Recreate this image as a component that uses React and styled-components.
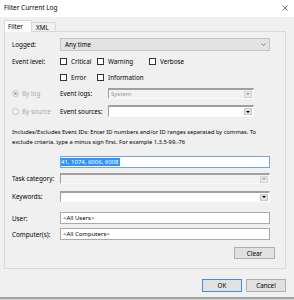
import React from 'react';
import styled, { createGlobalStyle } from 'styled-components';

const Global = createGlobalStyle`
  html, body { margin: 0; padding: 0; background: #d6d6d6; }
  body { width: 294px; height: 300px; overflow: hidden; }
  * { box-sizing: border-box; }
`;

const Dialog = styled.div`
  width: 294px;
  height: 299px;
  background: #f0f0f0;
  border-bottom: 2px solid #a3a3a3;
  display: flex;
  flex-direction: column;
  font-family: "Noto Sans", "Open Sans", sans-serif;
  font-size: 6.3px;
  color: #000;
`;

const TitleBar = styled.div`
  height: 17px;
  flex-shrink: 0;
  background: #fff;
  display: flex;
  align-items: center;
  justify-content: space-between;
  padding: 0 6px 2px 4px;
  font-size: 6.5px;
`;

const TabStrip = styled.div`
  margin-top: 3px;
  height: 12px;
  margin-bottom: -1px;
  padding-left: 4px;
  display: flex;
  align-items: flex-end;
  position: relative;
  z-index: 1;
`;

const Tab = styled.div`
  width: ${p => (p.$active ? 28 : 25)}px;
  height: ${p => (p.$active ? 12 : 10)}px;
  margin-left: ${p => (p.$active ? 0 : -1)}px;
  background: ${p => (p.$active ? '#fbfbfb' : '#f0f0f0')};
  border: 1px solid #d9d9d9;
  border-bottom: ${p => (p.$active ? 'none' : '1px solid #d9d9d9')};
  display: flex;
  align-items: center;
  padding-left: ${p => (p.$active ? 3 : 4)}px;
  padding-bottom: ${p => (p.$active ? 1 : 0)}px;
  font-size: 6.3px;
`;

const Panel = styled.div`
  margin: 0 8px 0 4px;
  border: 1px solid #dadada;
  background: #f0f0f0;
  padding: 0 15px 9px 7px;
  display: flex;
  flex-direction: column;
`;

const Row = styled.div`
  display: flex;
  align-items: center;
  height: ${p => p.$h}px;
  margin-top: ${p => p.$mt}px;
  margin-right: ${p => p.$mr || 0}px;
  justify-content: ${p => (p.$end ? 'flex-end' : 'flex-start')};
`;

const Label = styled.div`
  width: 48px;
  flex-shrink: 0;
  white-space: nowrap;
  color: ${p => (p.$disabled ? '#a3a3a3' : '#000')};
`;

const Select = styled.div`
  flex: 1;
  height: 13px;
  background: #e3e3e3;
  border: 1px solid #c4c4c4;
  display: flex;
  align-items: center;
  justify-content: space-between;
  padding: 0 3px 0 4px;
`;

const CheckGroup = styled.div`
  display: grid;
  grid-template-columns: 37px 52px auto;
  align-items: center;
`;

const Check = styled.label`
  display: flex;
  align-items: center;
  gap: 4px;
  white-space: nowrap;
`;

const Box = styled.span`
  width: 7px;
  height: 7px;
  background: #fff;
  border: 1px solid #333;
  flex-shrink: 0;
`;

const RadioCell = styled.div`
  width: 48px;
  flex-shrink: 0;
  display: flex;
  align-items: center;
  gap: 3px;
  color: #a8a8a8;
  white-space: nowrap;
`;

const RadioDot = styled.span`
  width: 7px;
  height: 7px;
  border-radius: 50%;
  border: 1px solid #c4c4c4;
  background: #f4f4f4;
  display: flex;
  align-items: center;
  justify-content: center;
  &::after {
    content: '';
    width: 3px;
    height: 3px;
    border-radius: 50%;
    background: ${p => (p.$checked ? '#a8a8a8' : 'transparent')};
  }
`;

const Combo = styled.div`
  flex: 1;
  height: ${p => p.$h || 11}px;
  background: ${p => (p.$disabled ? '#f2f2f2' : '#fff')};
  border-top: 2px solid #a0a0a0;
  border-left: 1px solid #a0a0a0;
  border-right: 1px solid #fafafa;
  border-bottom: 1px solid #fafafa;
  display: flex;
  align-items: center;
  justify-content: space-between;
  padding: 0 1px 0 2px;
  color: ${p => (p.$disabled ? '#9a9a9a' : '#000')};
  font-size: 6px;
`;

const ArrowBtn = styled.span`
  width: 8px;
  height: 7px;
  background: ${p => (p.$disabled ? '#e8e8e8' : '#e1e1e1')};
  border: 1px solid ${p => (p.$disabled ? '#d4d4d4' : '#c9c9c9')};
  display: flex;
  align-items: center;
  justify-content: center;
  &::after {
    content: '';
    border-left: 2px solid transparent;
    border-right: 2px solid transparent;
    border-top: 2px solid ${p => (p.$disabled ? '#a0a0a0' : '#000')};
  }
`;

const Description = styled.div`
  line-height: 10px;
  white-space: nowrap;
  font-size: 5.75px;
  margin-top: ${p => p.$mt}px;
`;

const Spacer = styled.div`
  width: 48px;
  flex-shrink: 0;
`;

const TextInput = styled.div`
  flex: 1;
  height: 12px;
  background: #fff;
  border: 1px solid ${p => (p.$focus ? '#6fa6dc' : '#a9a9a9')};
  display: flex;
  align-items: center;
  padding-left: ${p => (p.$focus ? 0 : 2)}px;
  font-size: 6px;
  white-space: nowrap;
  overflow: hidden;
`;

const Highlight = styled.span`
  background: #3390ff;
  color: #fff;
  line-height: 8px;
  padding-right: 1px;
`;

const Button = styled.div`
  width: ${p => p.$w || 40}px;
  height: ${p => p.$h || 13}px;
  background: #e1e1e1;
  border: 1px solid ${p => (p.$default ? '#3f8fdc' : '#b0b0b0')};
  display: flex;
  align-items: center;
  justify-content: center;
  font-size: 6.3px;
`;

const Footer = styled.div`
  margin-top: 10px;
  padding-right: 8px;
  display: flex;
  justify-content: flex-end;
  gap: 4px;
`;

const Chevron = () => (
  <svg width="5" height="3" viewBox="0 0 5 3">
    <polyline points="0.5,0.5 2.5,2.5 4.5,0.5" fill="none" stroke="#666" strokeWidth="0.8" />
  </svg>
);

const CloseX = () => (
  <svg width="6" height="6" viewBox="0 0 6 6">
    <path d="M0.5 0.5 L5.5 5.5 M5.5 0.5 L0.5 5.5" stroke="#444" strokeWidth="0.7" />
  </svg>
);

export default function App() {
  return (
    <>
      <Global />
      <Dialog>
        <TitleBar>
          <span>Filter Current Log</span>
          <CloseX />
        </TitleBar>
        <TabStrip>
          <Tab $active>Filter</Tab>
          <Tab>XML</Tab>
        </TabStrip>
        <Panel>
          <Row $h={13} $mt={6}>
            <Label>Logged:</Label>
            <Select>
              <span>Any time</span>
              <Chevron />
            </Select>
          </Row>
          <Row $h={10} $mt={5}>
            <Label>Event level:</Label>
            <CheckGroup>
              <Check><Box />Critical</Check>
              <Check><Box />Warning</Check>
              <Check><Box />Verbose</Check>
            </CheckGroup>
          </Row>
          <Row $h={10} $mt={6}>
            <Spacer />
            <CheckGroup>
              <Check><Box />Error</Check>
              <Check><Box />Information</Check>
            </CheckGroup>
          </Row>
          <Row $h={11} $mt={6} $mr={16}>
            <RadioCell><RadioDot $checked />By log</RadioCell>
            <Label>Event logs:</Label>
            <Combo $disabled>
              <span>System</span>
              <ArrowBtn $disabled />
            </Combo>
          </Row>
          <Row $h={12} $mt={6} $mr={16}>
            <RadioCell><RadioDot />By source</RadioCell>
            <Label>Event sources:</Label>
            <Combo $h={12}>
              <span />
              <ArrowBtn />
            </Combo>
          </Row>
          <Description $mt={10}>
            Includes/Excludes Event IDs: Enter ID numbers and/or ID ranges separated by commas. To
            <br />
            exclude criteria, type a minus sign first. For example 1,3,5-99,-76
          </Description>
          <Row $h={12} $mt={9}>
            <Spacer />
            <TextInput $focus>
              <Highlight>41, 1074, 6006, 6008</Highlight>
            </TextInput>
          </Row>
          <Row $h={11} $mt={5}>
            <Label>Task category:</Label>
            <Combo $disabled>
              <span />
              <ArrowBtn $disabled />
            </Combo>
          </Row>
          <Row $h={11} $mt={7}>
            <Label>Keywords:</Label>
            <Combo>
              <span />
              <ArrowBtn />
            </Combo>
          </Row>
          <Row $h={12} $mt={10}>
            <Label>User:</Label>
            <TextInput>&lt;All Users&gt;</TextInput>
          </Row>
          <Row $h={12} $mt={4}>
            <Label>Computer(s):</Label>
            <TextInput>&lt;All Computers&gt;</TextInput>
          </Row>
          <Row $h={12} $mt={7} $mr={-5} $end>
            <Button $w={41} $h={12}>Clear</Button>
          </Row>
        </Panel>
        <Footer>
          <Button $default>OK</Button>
          <Button>Cancel</Button>
        </Footer>
      </Dialog>
    </>
  );
}
